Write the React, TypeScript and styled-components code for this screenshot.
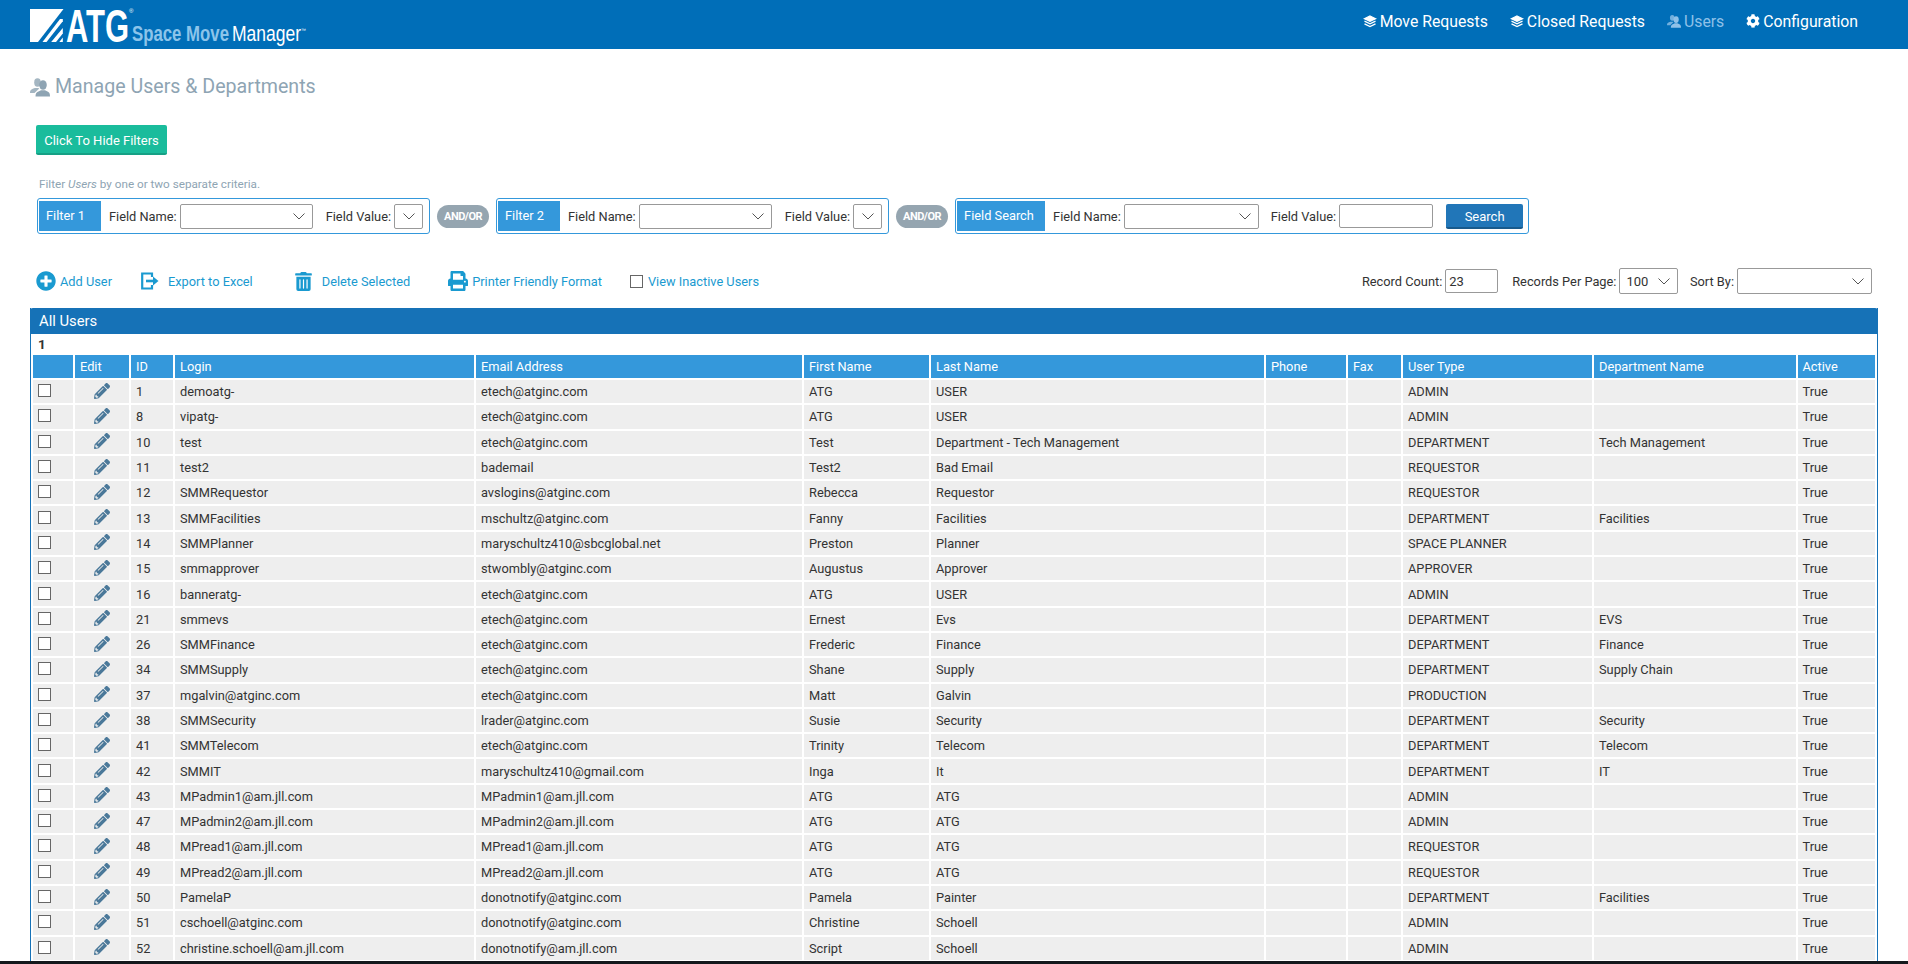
import React from "react";
import styled, { createGlobalStyle } from "styled-components";
import { FaCog, FaPencilAlt, FaPlusCircle, FaPrint, FaTrashAlt } from "react-icons/fa";

const GlobalStyle = createGlobalStyle`
  html, body {
    margin: 0;
    height: 964px;
    overflow: hidden;
    background: #fff;
    font-family: Roboto, "Liberation Sans", sans-serif;
    font-size: 12.8px;
    color: #333;
  }
`;

const CHEVRON =
  "url(\"data:image/svg+xml,%3Csvg xmlns='http://www.w3.org/2000/svg' width='12' height='7'%3E%3Cpath d='M.5.5 6 6 11.5.5' fill='none' stroke='%23555'/%3E%3C/svg%3E\")";

const Header = styled.header`
  height: 49px;
  background: #006eb8;
  display: flex;
  justify-content: space-between;
  align-items: center;
  padding: 0 50px 7px 30px;
  box-sizing: border-box;
`;

const LogoSvg = styled.svg`
  display: block;
  margin-top: 7px;
`;

const Nav = styled.nav`
  display: flex;
  align-items: center;
  gap: 22px;
`;

const NavItem = styled.a<{ $muted?: boolean }>`
  display: flex;
  align-items: center;
  gap: 3px;
  font-size: 15.8px;
  color: ${(p) => (p.$muted ? "#8fc1e8" : "#fff")};
  cursor: pointer;
`;

const Content = styled.main`
  padding: 0 30px;
`;

const PageTitle = styled.h1`
  display: flex;
  align-items: center;
  gap: 5px;
  margin: 0;
  height: 76px;
  padding-bottom: 1px;
  box-sizing: border-box;
  font-size: 19.6px;
  font-weight: 400;
  color: #8ea4b3;
`;

const ToggleButton = styled.button`
  display: block;
  margin-left: 6px;
  width: 131px;
  height: 30px;
  padding: 2px 0 0;
  border: 0;
  border-bottom: 2px solid #16a085;
  border-radius: 2px;
  background: #1abc9c;
  color: #fff;
  font: 400 13px Roboto, sans-serif;
`;

const Hint = styled.div`
  margin: 21px 0 0 9px;
  height: 16px;
  line-height: 16px;
  font-size: 11.7px;
  color: #8ea4b3;
`;

const FilterRow = styled.div`
  display: flex;
  align-items: center;
  margin: 6px 0 0 7px;
  gap: 7px;
`;

const FilterBox = styled.div<{ $pr: number }>`
  display: flex;
  align-items: center;
  height: 36px;
  padding: 0 ${(p) => p.$pr}px 0 1px;
  border: 1px solid #3498db;
  border-radius: 3px;
  box-sizing: border-box;
`;

const FilterTag = styled.div<{ $w: number }>`
  width: ${(p) => p.$w}px;
  height: 30px;
  line-height: 30px;
  padding-left: 7px;
  box-sizing: border-box;
  background: #3498db;
  color: #fff;
`;

const FieldLabel = styled.label<{ $ml: number }>`
  margin: 0 3px 0 ${(p) => p.$ml}px;
  white-space: nowrap;
`;

const Select = styled.select<{ $w: number; $h?: number }>`
  appearance: none;
  width: ${(p) => p.$w}px;
  height: ${(p) => p.$h ?? 25}px;
  padding: 0 0 0 6px;
  border: 1px solid #999;
  border-radius: 2px;
  background: #fff ${CHEVRON} no-repeat right 7px center;
  font: 400 13px Roboto, sans-serif;
  color: #333;
`;

const TextInput = styled.input<{ $w: number; $h: number }>`
  width: ${(p) => p.$w}px;
  height: ${(p) => p.$h}px;
  padding: 0 3px;
  border: 1px solid #999;
  border-radius: 2px;
  box-sizing: border-box;
  font: 400 13px Roboto, sans-serif;
  color: #333;
`;

const SearchButton = styled.button`
  width: 77px;
  height: 25px;
  margin-left: 13px;
  padding: 2px 0 0;
  border: 0;
  border-bottom: 2px solid #185a8c;
  border-radius: 2px;
  background: #2176b8;
  color: #fff;
  font: 400 13px Roboto, sans-serif;
`;

const AndOr = styled.div`
  width: 52px;
  height: 23px;
  line-height: 23px;
  border-radius: 12px;
  background: #95a5b0;
  color: #fff;
  font-size: 11px;
  font-weight: 700;
  letter-spacing: -0.5px;
  text-align: center;
`;

const Toolbar = styled.div`
  display: flex;
  justify-content: space-between;
  align-items: center;
  height: 26px;
  margin-top: 34px;
  padding: 0 6px;
`;

const ToolGroup = styled.div`
  display: flex;
  align-items: center;
`;

const ToolLink = styled.a<{ $ml?: number; $gap: number }>`
  display: flex;
  align-items: center;
  margin-left: ${(p) => p.$ml ?? 0}px;
  gap: ${(p) => p.$gap}px;
  color: #1a9ad0;
  cursor: pointer;
  white-space: nowrap;
`;

const Check = styled.input.attrs({ type: "checkbox" })`
  appearance: none;
  display: block;
  width: 13px;
  height: 13px;
  margin: 0;
  border: 1px solid #666;
  background: #fff;
`;

const RowCheck = styled(Check)`
  margin-bottom: 2px;
`;

const StatLabel = styled.label<{ $ml?: number }>`
  margin: 0 3px 0 ${(p) => p.$ml ?? 0}px;
  white-space: nowrap;
`;

const Panel = styled.section`
  margin-top: 14px;
  height: 700px;
  border-left: 1px solid #1672b7;
  border-right: 1px solid #1672b7;
`;

const PanelTitle = styled.div`
  height: 26px;
  line-height: 26px;
  margin: 0 -1px;
  padding-left: 9px;
  border-radius: 3px 3px 0 0;
  background: #1672b7;
  color: #fff;
  font-size: 14.8px;
`;

const Pager = styled.div`
  height: 19px;
  line-height: 21px;
  padding-left: 7px;
  font-size: 13.5px;
  font-weight: 700;
`;

const Table = styled.table`
  table-layout: fixed;
  border-collapse: separate;
  border-spacing: 2px;
  width: 1846px;
`;

const Col = styled.col<{ $w: number }>`
  width: ${(p) => p.$w}px;
`;

const Th = styled.th`
  height: 23px;
  padding: 0 5px;
  background: #3498db;
  color: #fff;
  font-weight: 400;
  text-align: left;
  overflow: hidden;
  white-space: nowrap;
`;

const Td = styled.td`
  height: 23.3px;
  padding: 0 5px;
  background: #eee;
  color: #333;
  overflow: hidden;
  white-space: nowrap;
`;

const EditIcon = styled(FaPencilAlt)`
  display: block;
  margin: 0 auto 2px;
  color: #4a7899;
`;

const BottomEdge = styled.div`
  position: fixed;
  left: 0;
  right: 0;
  bottom: 0;
  height: 3px;
  background: #14181c;
`;

const LayersIcon = () => (
  <svg width="14" height="13" viewBox="0 0 13 13" fill="none" stroke="currentColor" strokeWidth="1.300">
    <path d="M6.500 1 12 3.700 6.500 6.400 1 3.700Z" fill="currentColor" />
    <path d="M1 6.200l5.500 2.700L12 6.200" />
    <path d="M1 8.800l5.500 2.700L12 8.800" />
  </svg>
);

const PeopleIcon = ({ size }: { size: number }) => (
  <svg width={size} height={size} viewBox="0 0 20 20" fill="currentColor">
    <g opacity=".8">
      <ellipse cx="7.500" cy="5.500" rx="3.300" ry="4.200" />
      <path d="M0 16c0-2.500.800-3.400 2.800-4.200l2-.8h3.500l1 .6-4.800 4.400Z" />
    </g>
    <ellipse cx="13" cy="8" rx="3.800" ry="4.800" />
    <path d="M5.500 19.500c0-3 1-4.200 3.500-5.200l2-1h4l2 1c2.300 1 3 2.200 3 5.200Z" />
  </svg>
);

const ExportIcon = () => (
  <svg width="18" height="18" viewBox="0 0 18 18" fill="none" stroke="currentColor" strokeWidth="2.200">
    <path d="M11 5V1.500H1.200v15H11V13" />
    <path d="M5 9h8" strokeWidth="2.600" />
    <path d="M12 4.500 17.500 9 12 13.500Z" fill="currentColor" stroke="none" />
  </svg>
);

const Logo = () => (
  <LogoSvg width="278" height="42" viewBox="30 2 278 42">
    <path fill="#fff" d="M30 7h33.500L38 40h-8Z" />
    <path fill="#fff" d="M60 17h2.800v2.300L46.500 40h-4Z" />
    <path fill="#fff" d="M62.800 26v5.500L56 40h-4.800Z" />
    <path fill="#fff" d="M62.800 35.500V40h-3.500Z" />
    <text x="66" y="40" fill="#fff" fontFamily="Liberation Sans" fontWeight="700" fontSize="46" textLength="63" lengthAdjust="spacingAndGlyphs">
      ATG
    </text>
    <text x="129" y="11" fill="#fff" fontFamily="Liberation Sans" fontSize="6">
      ®
    </text>
    <text x="132" y="39" fill="#8cc4ea" fontFamily="Liberation Sans" fontWeight="700" fontSize="21.500" textLength="97" lengthAdjust="spacingAndGlyphs">
      Space Move
    </text>
    <text x="232" y="39" fill="#fff" fontFamily="Liberation Sans" fontSize="21.500" textLength="69" lengthAdjust="spacingAndGlyphs">
      Manager
    </text>
    <text x="301" y="30" fill="#fff" fontFamily="Liberation Sans" fontSize="5">
      ™
    </text>
  </LogoSvg>
);

const columns: [string, number][] = [
  ["", 40],
  ["Edit", 54],
  ["ID", 42],
  ["Login", 299],
  ["Email Address", 326],
  ["First Name", 125],
  ["Last Name", 333],
  ["Phone", 80],
  ["Fax", 53],
  ["User Type", 189],
  ["Department Name", 201.5],
  ["Active", 77.5],
];

// id, login, email, first, last, type, department
const users: string[][] = [
  ["1", "demoatg-", "etech@atginc.com", "ATG", "USER", "ADMIN", ""],
  ["8", "vipatg-", "etech@atginc.com", "ATG", "USER", "ADMIN", ""],
  ["10", "test", "etech@atginc.com", "Test", "Department - Tech Management", "DEPARTMENT", "Tech Management"],
  ["11", "test2", "bademail", "Test2", "Bad Email", "REQUESTOR", ""],
  ["12", "SMMRequestor", "avslogins@atginc.com", "Rebecca", "Requestor", "REQUESTOR", ""],
  ["13", "SMMFacilities", "mschultz@atginc.com", "Fanny", "Facilities", "DEPARTMENT", "Facilities"],
  ["14", "SMMPlanner", "maryschultz410@sbcglobal.net", "Preston", "Planner", "SPACE PLANNER", ""],
  ["15", "smmapprover", "stwombly@atginc.com", "Augustus", "Approver", "APPROVER", ""],
  ["16", "banneratg-", "etech@atginc.com", "ATG", "USER", "ADMIN", ""],
  ["21", "smmevs", "etech@atginc.com", "Ernest", "Evs", "DEPARTMENT", "EVS"],
  ["26", "SMMFinance", "etech@atginc.com", "Frederic", "Finance", "DEPARTMENT", "Finance"],
  ["34", "SMMSupply", "etech@atginc.com", "Shane", "Supply", "DEPARTMENT", "Supply Chain"],
  ["37", "mgalvin@atginc.com", "etech@atginc.com", "Matt", "Galvin", "PRODUCTION", ""],
  ["38", "SMMSecurity", "lrader@atginc.com", "Susie", "Security", "DEPARTMENT", "Security"],
  ["41", "SMMTelecom", "etech@atginc.com", "Trinity", "Telecom", "DEPARTMENT", "Telecom"],
  ["42", "SMMIT", "maryschultz410@gmail.com", "Inga", "It", "DEPARTMENT", "IT"],
  ["43", "MPadmin1@am.jll.com", "MPadmin1@am.jll.com", "ATG", "ATG", "ADMIN", ""],
  ["47", "MPadmin2@am.jll.com", "MPadmin2@am.jll.com", "ATG", "ATG", "ADMIN", ""],
  ["48", "MPread1@am.jll.com", "MPread1@am.jll.com", "ATG", "ATG", "REQUESTOR", ""],
  ["49", "MPread2@am.jll.com", "MPread2@am.jll.com", "ATG", "ATG", "REQUESTOR", ""],
  ["50", "PamelaP", "donotnotify@atginc.com", "Pamela", "Painter", "DEPARTMENT", "Facilities"],
  ["51", "cschoell@atginc.com", "donotnotify@atginc.com", "Christine", "Schoell", "ADMIN", ""],
  ["52", "christine.schoell@am.jll.com", "donotnotify@am.jll.com", "Script", "Schoell", "ADMIN", ""],
];

const FilterFields = () => (
  <>
    <FieldLabel $ml={8}>Field Name:</FieldLabel>
    <Select $w={133} />
    <FieldLabel $ml={13}>Field Value:</FieldLabel>
    <Select $w={29} />
  </>
);

const App: React.FC = () => (
  <>
    <GlobalStyle />
    <Header>
      <Logo />
      <Nav>
        <NavItem><LayersIcon />Move Requests</NavItem>
        <NavItem><LayersIcon />Closed Requests</NavItem>
        <NavItem $muted><PeopleIcon size={14} />Users</NavItem>
        <NavItem><FaCog size={14} />Configuration</NavItem>
      </Nav>
    </Header>
    <Content>
      <PageTitle><PeopleIcon size={20} />Manage Users &amp; Departments</PageTitle>
      <ToggleButton>Click To Hide Filters</ToggleButton>
      <Hint>Filter <i>Users</i> by one or two separate criteria.</Hint>
      <FilterRow>
        <FilterBox $pr={6}>
          <FilterTag $w={62}>Filter 1</FilterTag>
          <FilterFields />
        </FilterBox>
        <AndOr>AND/OR</AndOr>
        <FilterBox $pr={6}>
          <FilterTag $w={62}>Filter 2</FilterTag>
          <FilterFields />
        </FilterBox>
        <AndOr>AND/OR</AndOr>
        <FilterBox $pr={5}>
          <FilterTag $w={88}>Field Search</FilterTag>
          <FieldLabel $ml={8}>Field Name:</FieldLabel>
          <Select $w={135} />
          <FieldLabel $ml={12}>Field Value:</FieldLabel>
          <TextInput $w={94} $h={24} />
          <SearchButton>Search</SearchButton>
        </FilterBox>
      </FilterRow>
      <Toolbar>
        <ToolGroup>
          <ToolLink $gap={4}><FaPlusCircle size={20} />Add User</ToolLink>
          <ToolLink $ml={29} $gap={9}><ExportIcon />Export to Excel</ToolLink>
          <ToolLink $ml={41} $gap={9}><FaTrashAlt size={19} />Delete Selected</ToolLink>
          <ToolLink $ml={38} $gap={4}><FaPrint size={20} />Printer Friendly Format</ToolLink>
          <ToolLink $ml={28} $gap={5}><Check />View Inactive Users</ToolLink>
        </ToolGroup>
        <ToolGroup>
          <StatLabel>Record Count:</StatLabel>
          <TextInput $w={53} $h={24} defaultValue="23" />
          <StatLabel $ml={14}>Records Per Page:</StatLabel>
          <Select $w={58.5} $h={26} defaultValue="100"><option>100</option></Select>
          <StatLabel $ml={12}>Sort By:</StatLabel>
          <Select $w={135} $h={26} />
        </ToolGroup>
      </Toolbar>
      <Panel>
        <PanelTitle>All Users</PanelTitle>
        <Pager>1</Pager>
        <Table>
          <colgroup>
            {columns.map(([, w], i) => <Col key={i} $w={w} />)}
          </colgroup>
          <thead>
            <tr>
              {columns.map(([label], i) => <Th key={i}>{label}</Th>)}
            </tr>
          </thead>
          <tbody>
            {users.map(([id, login, email, first, last, type, dept]) => (
              <tr key={id}>
                <Td><RowCheck /></Td>
                <Td><EditIcon size={16} /></Td>
                <Td>{id}</Td>
                <Td>{login}</Td>
                <Td>{email}</Td>
                <Td>{first}</Td>
                <Td>{last}</Td>
                <Td />
                <Td />
                <Td>{type}</Td>
                <Td>{dept}</Td>
                <Td>True</Td>
              </tr>
            ))}
          </tbody>
        </Table>
      </Panel>
    </Content>
    <BottomEdge />
  </>
);

export default App;
